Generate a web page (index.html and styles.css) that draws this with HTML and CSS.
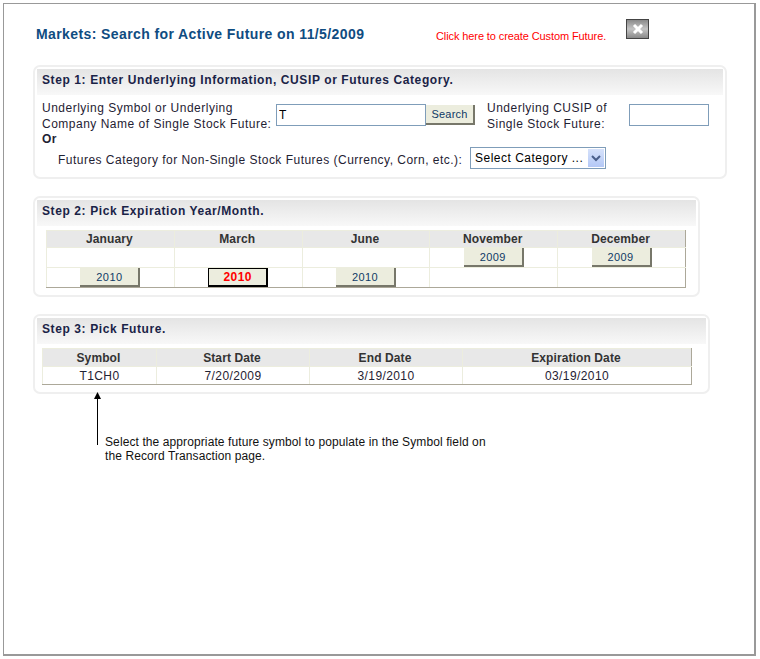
FILE: index.html
```html
<!DOCTYPE html>
<html lang="en">
<head>
    <meta charset="UTF-8">
    <title>Markets: Search for Active Future</title>
    <link rel="stylesheet" href="styles.css">
</head>
<body>
    <div class="frame">
        <div class="top-row">
            <h1 class="page-title">Markets: Search for Active Future on 11/5/2009</h1>
            <a class="custom-link" href="#">Click here to create Custom Future.</a>
            <button class="close-button" aria-label="Close">
                <svg width="12" height="12" viewBox="0 0 12 12"><path d="M2 2 L10 10 M10 2 L2 10" stroke="#fff" stroke-width="3" fill="none"/></svg>
            </button>
        </div>

        <div class="panel panel-one">
            <div class="panel-head">Step 1: Enter Underlying Information, CUSIP or Futures Category.</div>
            <div class="search-row">
                <label class="symbol-label">Underlying Symbol or Underlying<br>Company Name of Single Stock Future:</label>
                <input type="text" class="field symbol-field" value="T">
                <button class="search-button">Search</button>
                <label class="cusip-label">Underlying CUSIP of<br>Single Stock Future:</label>
                <input type="text" class="field cusip-field">
            </div>
            <div class="or-text">Or</div>
            <div class="category-row">
                <label class="category-label">Futures Category for Non-Single Stock Futures (Currency, Corn, etc.):</label>
                <div class="select-box">
                    <span>Select Category ...</span>
                    <span class="select-arrow">
                        <svg width="10" height="7" viewBox="0 0 10 7"><path d="M1 1 L5 5 L9 1" stroke="#4a5f8a" stroke-width="2" fill="none"/></svg>
                    </span>
                </div>
            </div>
        </div>

        <div class="panel panel-two">
            <div class="panel-head">Step 2: Pick Expiration Year/Month.</div>
            <table class="grid month-grid">
                <tr>
                    <th>January</th><th>March</th><th>June</th><th>November</th><th>December</th>
                </tr>
                <tr>
                    <td></td><td></td><td></td>
                    <td><button class="year-button">2009</button></td>
                    <td><button class="year-button">2009</button></td>
                </tr>
                <tr>
                    <td><button class="year-button">2010</button></td>
                    <td><button class="year-button selected">2010</button></td>
                    <td><button class="year-button">2010</button></td>
                    <td></td><td></td>
                </tr>
            </table>
        </div>

        <div class="panel panel-three">
            <div class="panel-head">Step 3: Pick Future.</div>
            <table class="grid future-grid">
                <tr>
                    <th class="col-symbol">Symbol</th>
                    <th class="col-date">Start Date</th>
                    <th class="col-date">End Date</th>
                    <th>Expiration Date</th>
                </tr>
                <tr>
                    <td>T1CH0</td><td>7/20/2009</td><td>3/19/2010</td><td>03/19/2010</td>
                </tr>
            </table>
        </div>

        <div class="note-row">
            <svg class="note-arrow" width="7" height="53" viewBox="0 0 7 53"><path d="M3.5 0 L7 7 L0 7 Z" fill="#000"/><path d="M3.5 5 V53" stroke="#000" stroke-width="1"/></svg>
            <p class="note-text">Select the appropriate future symbol to populate in the Symbol field on<br>the Record Transaction page.</p>
        </div>
    </div>
</body>
</html>
```

FILE: styles.css
```css
html, body {
    margin: 0;
    padding: 0;
    background-color: #fff;
}

body {
    font-family: "Liberation Sans", Arial, sans-serif;
    font-size: 12px;
    color: #1f2233;
}

.frame {
    box-sizing: border-box;
    width: 753px;
    height: 653px;
    margin: 3px 0 0 3px;
    padding: 0 0 0 29px;
    border: 1px solid #999;
    border-right-width: 2px;
    border-bottom-width: 2px;
}

.top-row {
    display: flex;
    align-items: flex-start;
    height: 61px;
}

.page-title {
    margin: 21px 0 0 3px;
    width: 400px;
    font-size: 14px;
    line-height: 18px;
    letter-spacing: 0.4px;
    color: #0f4c81;
}

.custom-link {
    margin-top: 25px;
    width: 190px;
    font-size: 11px;
    line-height: 14px;
    letter-spacing: -0.1px;
    color: #f00;
    text-decoration: none;
}

.close-button {
    display: flex;
    align-items: center;
    justify-content: center;
    box-sizing: border-box;
    width: 23px;
    height: 20px;
    margin-top: 15px;
    padding: 0;
    border: 1px solid #444;
    background: linear-gradient(#8a8a8a, #c4c4c4 50%, #8a8a8a);
}

.panel {
    box-sizing: border-box;
    padding: 2px;
    border: 2px solid #efefef;
    border-radius: 7px;
    background-color: #fff;
}

.panel-one { width: 694px; height: 114px; }
.panel-two { width: 667px; height: 101px; margin-top: 17px; }
.panel-three { width: 677px; height: 80px; margin-top: 17px; }

.panel-head {
    height: 26px;
    padding-left: 5px;
    font-size: 12px;
    font-weight: bold;
    line-height: 22px;
    letter-spacing: 0.6px;
    color: #1a2347;
    background: linear-gradient(#e4e4e4, #f8f8f8);
}

.search-row {
    display: flex;
    align-items: flex-start;
    margin-top: 4px;
}

.search-row label {
    margin-top: 1px;
    line-height: 16px;
    letter-spacing: 0.5px;
}

.symbol-label {
    width: 234px;
    margin-left: 5px;
    white-space: nowrap;
}

.field {
    box-sizing: border-box;
    height: 22px;
    margin: 5px 0 0;
    padding: 0 2px;
    border: 1px solid #7f9db9;
    font-family: "Liberation Sans", Arial, sans-serif;
    font-size: 12px;
    color: #000;
    border-radius: 0;
    outline: none;
}

.symbol-field { width: 150px; }
.cusip-field { width: 80px; }

.search-button {
    box-sizing: border-box;
    width: 49px;
    height: 20px;
    margin-top: 6px;
    padding: 0;
    border: none;
    border-right: 2px solid #77776a;
    border-bottom: 2px solid #77776a;
    background-color: #ecedde;
    color: #0f3a66;
    font-family: "Liberation Sans", Arial, sans-serif;
    font-size: 11px;
    letter-spacing: 0.2px;
}

.cusip-label {
    width: 142px;
    margin-left: 12px;
    white-space: nowrap;
}

.or-text {
    margin-left: 5px;
    font-weight: bold;
    line-height: 15px;
    letter-spacing: 0.4px;
}

.category-row {
    display: flex;
    align-items: flex-start;
}

.category-label {
    width: 412px;
    margin: 6px 0 0 21px;
    line-height: 15px;
    letter-spacing: 0.48px;
    white-space: nowrap;
}

.select-box {
    display: flex;
    align-items: center;
    justify-content: space-between;
    box-sizing: border-box;
    width: 136px;
    height: 22px;
    padding: 0 1px 0 4px;
    border: 1px solid #7f9db9;
    color: #000;
    letter-spacing: 0.5px;
    white-space: nowrap;
}

.select-arrow {
    display: flex;
    align-items: center;
    justify-content: center;
    width: 16px;
    height: 18px;
    background: linear-gradient(#d6e2fb, #b4c8f6);
}

.grid {
    border-collapse: collapse;
    table-layout: fixed;
}

.grid th,
.grid td {
    padding: 0;
    border: 1px solid #ecedde;
    text-align: center;
    letter-spacing: 0.1px;
}

.grid th {
    padding-right: 2px;
    background-color: #e8e8e8;
    color: #333;
    font-weight: bold;
}

.grid tr:last-child td {
    border-bottom-color: #aca899;
}

.grid tr > :last-child {
    border-right-color: #aca899;
}

.month-grid {
    width: 640px;
    margin: 4px 0 0 9px;
}

.month-grid th { height: 16px; line-height: 16px; }
.month-grid td { height: 19px; vertical-align: top; }

.year-button {
    display: block;
    box-sizing: border-box;
    width: 60px;
    height: 19px;
    margin: 0 auto;
    padding: 0;
    border: none;
    border-right: 2px solid #77776a;
    border-bottom: 2px solid #77776a;
    background-color: #ecedde;
    color: #0f3a66;
    font-family: "Liberation Sans", Arial, sans-serif;
    font-size: 11px;
    letter-spacing: 0.4px;
}

.year-button.selected {
    border: 1px solid #000;
    border-right-width: 2px;
    border-bottom-width: 2px;
    color: #f00;
    font-weight: bold;
    font-size: 12px;
}

.future-grid {
    width: 650px;
    margin: 4px 0 0 5px;
}

.future-grid th { height: 17px; line-height: 16px; }
.future-grid td { height: 17px; color: #1f2233; letter-spacing: 0.4px; }
.col-symbol { width: 111px; }
.col-date { width: 150px; }

.note-row {
    display: flex;
    align-items: flex-end;
    margin: -2px 0 0 61px;
}

.note-arrow { display: block; }

.note-text {
    margin: 0 0 -18px 4px;
    line-height: 14px;
    font-size: 12px;
    color: #111;
    letter-spacing: 0.1px;
}
```
